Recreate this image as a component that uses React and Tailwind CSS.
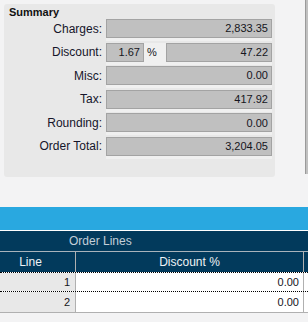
const ROWS = [
  { label: 'Charges:', value: '2,833.35' },
  { label: 'Discount:', pct: '1.67', value: '47.22' },
  { label: 'Misc:', value: '0.00' },
  { label: 'Tax:', value: '417.92' },
  { label: 'Rounding:', value: '0.00' },
  { label: 'Order Total:', value: '3,204.05' },
]

const LINES = [
  { line: 1, discount: '0.00', current: true },
  { line: 2, discount: '0.00' },
]

const Field = ({ value, className }) => (
  <div className={`h-[19px] border border-[#a3a3a3] bg-[#c0c0c0] pr-[3px] flex items-center justify-end text-[11px] text-[#151520] ${className}`}>
    {value}
  </div>
)

export default function App() {
  return (
    <div className="w-[308px] h-[322px] overflow-hidden bg-[#f3f3f4] font-['Liberation_Sans',Arial,sans-serif]">
      {/* Summary area */}
      <div className="h-[207px] flex">
        <div className="mt-[4px] ml-[4px] w-[271px] h-[173px] bg-[#e8e8e8] rounded-[3px] pl-[5px] pr-[3px] pt-[2px]">
          <div className="text-[11px] leading-[12px] font-bold text-[#111]">Summary</div>
          <div className="mt-[1px] flex flex-col gap-[1.6px]">
            {ROWS.map((row) => (
              <div key={row.label} className="flex items-start">
                <div className="w-[93px] h-[19px] flex items-center justify-end text-[12px] text-[#15152a]">
                  {row.label}
                </div>
                <div className="ml-[4px] w-[166px] pb-[3px] bg-[#f0f0f0] flex items-center">
                  {row.pct ? (
                    <>
                      <Field value={row.pct} className="w-[38px]" />
                      <span className="ml-[3px] w-[19px] text-[11px] text-[#151520]">%</span>
                      <Field value={row.value} className="w-[106px]" />
                    </>
                  ) : (
                    <Field value={row.value} className="w-[166px]" />
                  )}
                </div>
              </div>
            ))}
          </div>
        </div>
        <div className="ml-auto w-[3px] h-[174px] bg-[#c0c0c0] border-l border-[#9a9a9a]" />
      </div>

      {/* Blue bar */}
      <div className="h-[23px] bg-[#29a8e0]" />
      <div className="h-[1px] bg-white" />

      {/* Order lines grid */}
      <div className="bg-white">
        <div className="h-[21px] bg-[#023a5c] flex items-center pl-[69px] text-[12px] text-[#c3cfd9] border-b border-[#a9b3bb]">
          Order Lines
        </div>
        <div className="h-[20px] bg-[#023a5c] flex text-[12px] text-[#eef2f5]">
          <div className="w-[76px] pr-[14px] flex items-center justify-center border-r border-[#b0b0b0]">Line</div>
          <div className="w-[228px] flex items-center justify-center border-r border-[#b0b0b0]">Discount %</div>
        </div>
        {LINES.map((l) => (
          <div
            key={l.line}
            className={`flex text-[11px] text-[#151520] ${l.current ? 'h-[20px] border-y border-dotted border-black' : 'h-[21px] border-b border-[#b0b0b0]'}`}
          >
            <div className="w-[76px] bg-[#e8e8e8] pr-[5px] flex items-center justify-end border-r border-[#b0b0b0]">
              {l.line}
            </div>
            <div className="w-[228px] pr-[4px] flex items-center justify-end border-r border-[#b0b0b0]">
              {l.discount}
            </div>
          </div>
        ))}
      </div>
    </div>
  )
}
